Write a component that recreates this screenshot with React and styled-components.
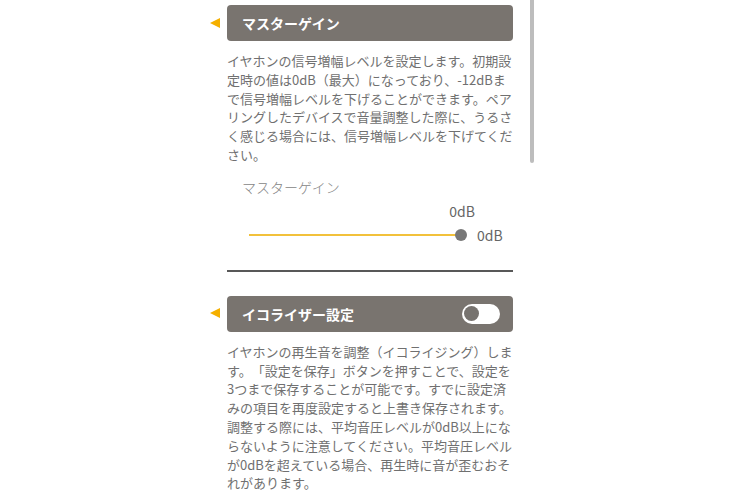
import React from "react";
import styled, { createGlobalStyle } from "styled-components";

const Global = createGlobalStyle`
  html, body { margin: 0; padding: 0; background: #ffffff; }
  body {
    font-family: "Noto Sans CJK JP", "Noto Sans", sans-serif;
    -webkit-font-smoothing: antialiased;
    text-spacing-trim: space-all;
  }
`;

const Page = styled.div`
  position: relative;
  width: 740px;
  height: 493px;
  overflow: hidden;
  background: #ffffff;
`;

const ScrollThumb = styled.div`
  position: absolute;
  top: 0;
  left: 530px;
  width: 4px;
  height: 163px;
  background: #bdbdbd;
  border-radius: 0 0 2px 2px;
`;

const Column = styled.div`
  width: 286px;
  margin: 0 auto;
  padding-top: 5px;
  display: flex;
  flex-direction: column;
`;

const SectionBar = styled.div`
  position: relative;
  height: 36px;
  box-sizing: border-box;
  padding: 0 13px 0 15px;
  background: #79746f;
  border-radius: 4px;
  display: flex;
  align-items: center;
  justify-content: space-between;
  margin-top: ${(p) => p.$top || 0}px;

  &::before {
    content: "";
    position: absolute;
    left: -17px;
    top: 50%;
    margin-top: -5.5px;
    border-style: solid;
    border-width: 5.5px 10px 5.5px 0;
    border-color: transparent #f5b000 transparent transparent;
  }
`;

const BarTitle = styled.span`
  color: #ffffff;
  font-size: 14px;
  font-weight: 700;
  line-height: 20px;
`;

const Toggle = styled.div`
  width: 38px;
  height: 20px;
  box-sizing: border-box;
  padding: 0 2px;
  border-radius: 10px;
  background: #ffffff;
  display: flex;
  align-items: center;
  justify-content: ${(p) => (p.$on ? "flex-end" : "flex-start")};
`;

const Knob = styled.span`
  width: 15px;
  height: 15px;
  border-radius: 50%;
  background: #77736f;
`;

const Description = styled.p`
  margin: 11px 0 0;
  font-size: 13px;
  line-height: 18.8px;
  color: #707070;
  white-space: pre-line;
  text-spacing-trim: space-all;
`;

const ControlLabel = styled.div`
  margin-top: 12px;
  padding-left: 15px;
  font-size: 14px;
  line-height: 20px;
  color: #858585;
  font-weight: 300;
`;

const ValueReadout = styled.div`
  margin-top: 4px;
  padding-right: 38px;
  text-align: right;
  font-size: 14px;
  line-height: 20px;
  color: #666666;
`;

const SliderRow = styled.div`
  margin-top: 4px;
  height: 20px;
  padding-left: 22px;
  display: flex;
  align-items: center;
`;

const Track = styled.div`
  position: relative;
  width: 212px;
  height: 2px;
  background: #f2c13b;
`;

const Thumb = styled.span`
  position: absolute;
  top: 50%;
  width: 12px;
  height: 12px;
  margin: -6px 0 0 -6px;
  border-radius: 50%;
  background: #787878;
`;

const SliderValue = styled.span`
  margin-left: 16px;
  font-size: 14px;
  line-height: 20px;
  color: #666666;
`;

const Divider = styled.hr`
  margin: 25px 0 0;
  border: 0;
  height: 2px;
  background: #585858;
`;

const gainText = [
  "イヤホンの信号増幅レベルを設定します。初期設",
  "定時の値は0dB（最大）になっており、-12dBま",
  "で信号増幅レベルを下げることができます。ペア",
  "リングしたデバイスで音量調整した際に、うるさ",
  "く感じる場合には、信号増幅レベルを下げてくだ",
  "さい。",
].join("\n");

const eqText = [
  "イヤホンの再生音を調整（イコライジング）しま",
  "す。「設定を保存」ボタンを押すことで、設定を",
  "3つまで保存することが可能です。すでに設定済",
  "みの項目を再度設定すると上書き保存されます。",
  "調整する際には、平均音圧レベルが0dB以上にな",
  "らないように注意してください。平均音圧レベル",
  "が0dBを超えている場合、再生時に音が歪むおそ",
  "れがあります。",
].join("\n");

export default function App() {
  const gain = 0;
  const min = -12;
  const pos = ((gain - min) / (0 - min)) * 100;

  return (
    <Page>
      <Global />
      <ScrollThumb />
      <Column>
        <SectionBar>
          <BarTitle>マスターゲイン</BarTitle>
        </SectionBar>
        <Description>{gainText}</Description>

        <ControlLabel>マスターゲイン</ControlLabel>
        <ValueReadout>{gain}dB</ValueReadout>
        <SliderRow>
          <Track>
            <Thumb style={{ left: `${pos}%` }} />
          </Track>
          <SliderValue>{gain}dB</SliderValue>
        </SliderRow>

        <Divider />

        <SectionBar $top={24}>
          <BarTitle>イコライザー設定</BarTitle>
          <Toggle>
            <Knob />
          </Toggle>
        </SectionBar>
        <Description>{eqText}</Description>
      </Column>
    </Page>
  );
}
